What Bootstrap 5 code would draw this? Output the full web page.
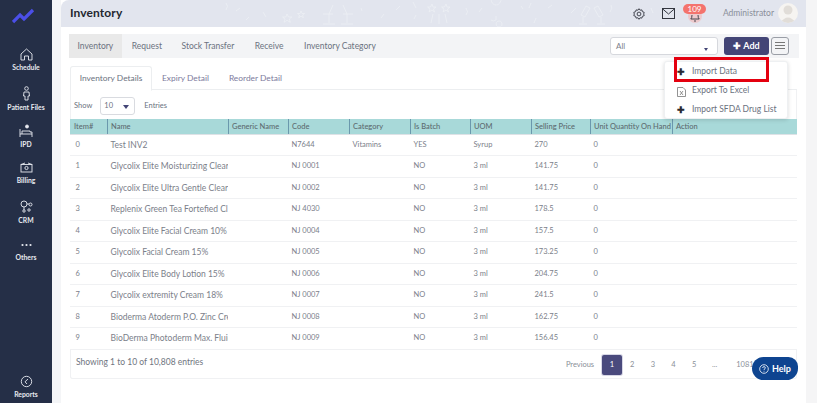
<!DOCTYPE html>
<html lang="en"><head><meta charset="utf-8"><title>Inventory</title>
<link href="https://cdn.jsdelivr.net/npm/bootstrap@5.3.0/dist/css/bootstrap.min.css" rel="stylesheet">
<style>
html,body{height:403px;overflow:hidden}
body{font-family:Lato,"Noto Sans",sans-serif;color:#6b7280;background:#fff;font-size:8px}
.shell{height:403px}
.rail{width:52px;background:#252f47;color:#e8eaf0;flex:none}
.logo-box{height:48px;padding:8px 0 0 12px}
.rail-item{font-size:6.8px;font-weight:700;line-height:8px;text-align:center;height:38px}
.rail-item svg{display:block;margin:0 auto 2px}
.rail-last{height:28px}
.rail-gap{width:9px;background:#f4f5f7;flex:none}
.main{width:745px;flex:none;position:relative}
.scroll-band{width:11px;background:#f5f5f6;flex:none}
.topbar{height:27px;background:#e2e5ee;border-top-left-radius:8px;padding:0 0 0 9px;position:relative;overflow:hidden}
.topbar h1{font-size:12px;font-weight:700;color:#23272f;margin:0;letter-spacing:.1px}
.confetti{position:absolute;left:0;top:0;width:745px;height:27px}
.admin{font-size:8.5px;color:#8a8f9a;margin:0 4px 0 0}
.avatar{width:20px;height:20px;border-radius:50%;background:#f6f4f1;overflow:hidden;margin-right:8px;margin-top:-1px}
.top-icons{position:relative;z-index:1}
.mail-ic{margin:0 48px 0 17px}
.alert-pill{position:absolute;left:622px;top:4px;width:23px;height:10px;background:#f4736d;color:#fff;font-size:8px;line-height:10px;text-align:center;border-radius:6px;z-index:2}
.bell{position:absolute;left:627px;top:9px;z-index:1;background:#edc9cc;border-radius:50%;width:14px;height:14px}
.bell svg{display:block}
.tabbar{margin:7px 7px 0 8px;height:24px;background:#f3f4f6}
.tabbar a{font-size:8.5px;color:#6b7280;text-decoration:none;padding:0 8.5px;line-height:24px;display:block}
.tabbar a.on{background:#e9e9e9}
.tabbar a.t-req{padding-left:10px}
.tabbar a.t-stock{padding-left:11px}
.tabbar a.t-rec{padding-left:12px}
.tabbar a.t-cat{padding-left:12px}
.filter-box{width:108px;height:18px;border:1px solid #d6d8dd;border-radius:3px;background:#fff;font-size:8px;padding:0 5px;line-height:16px;position:relative;color:#7b808a}
.caret-mini{position:absolute;right:9px;top:10px;border:solid transparent;border-width:3px 2.5px 0;border-top-color:#434576;width:0;height:0}
.caret-big{right:5px;top:7px;border-width:4px 3px 0}
.add-btn{width:45px;height:18px;background:#434576;border-radius:3px;color:#fff;font-size:9px;font-weight:700;line-height:18px;text-align:center;margin-left:6px}
.menu-btn{width:18px;height:18px;border:1px solid #9a9ea6;border-radius:3px;margin:0 10px 0 2px;padding:4px 3px}
.menu-btn i{display:block;height:1px;background:#777;margin-bottom:2px}
.tabs-line{margin:8px 9px 0 9px;height:24px;border-bottom:1px solid #eceef0}
.tabs-line a{display:block;font-size:8.4px;color:#7c7a9c;text-decoration:none;padding:0 10px;line-height:24px}
.tabs-line a.on{color:#6b7280;background:#fff;border:1px solid #eceef0;border-bottom-color:#fff;border-radius:3px 3px 0 0;height:25px;line-height:23px;width:82px;padding:0;text-align:center}
.panel{margin:0 9px 0 9px;box-shadow:inset 1px 0 0 #f0f1f3,inset -1px 0 0 #f0f1f3,inset 0 -1px 0 #f0f1f3;border-radius:0 0 3px 3px;height:289px;position:relative}
.show-row{height:29px;padding:7px 0 0 4px;font-size:7.5px}
.lbl{line-height:18px}
.len-box{width:35px;height:18px;border:1px solid #d9dbe0;border-radius:3px;margin:0 9px 0 8px;padding:0 3px;line-height:16px;position:relative;color:#6b7280}
.inv{table-layout:fixed;width:727px;margin:0;font-size:7.5px;color:#757b86;border-collapse:collapse}
.c1{width:37px}.c2{width:121px}.c3{width:60px}.c4{width:61px}.c5{width:59px}.c6{width:82px}
.inv th{background:#a8d9d9;font-weight:500;height:15px;padding:0 3.5px;color:#5d6b70;border-right:1px solid #6b98ad;white-space:nowrap;overflow:hidden;line-height:14px}
.inv th:last-child{border-right:0}
.inv th:first-child{padding-left:4px}
.inv td{height:21.5px;padding:0 3.5px;white-space:nowrap;overflow:hidden;border:0;border-bottom:1px solid #f0f1f3;line-height:20px;background:#fff;color:#7b808a}
.inv td:first-child{padding-left:5.5px}
.inv td.nm{font-size:8.5px}
.foot{padding:6px 0 0 6px;font-size:8.5px;color:#6f7580}
.pager{font-size:7.5px;position:absolute;left:488px;top:265px;height:20px;color:#8a8f98}
.pager span{display:block;width:20.6px;text-align:center;line-height:20px}
.pager .now{background:#4a4a7d;color:#fff;box-shadow:0 0 0 1px #d8d8e6;width:20px;border-radius:2px}
.pager .prev{width:44px}
.pager .end{width:40px}
.drop{position:absolute;left:603px;top:61px;width:124px;height:58px;background:#fff;border:1px solid #eef0f2;border-radius:3px;box-shadow:0 1px 4px rgba(0,0,0,.15);z-index:5;font-size:8.5px;color:#6b7280}
.drop div{height:19px;line-height:19px;padding-left:12px;display:flex;align-items:center}
.drop .gl{width:15px;flex:none;color:#2a2a33;font-size:9px;font-weight:700}
.hot{position:absolute;left:613px;top:57px;width:95px;height:25px;border:3px solid #e4000f;z-index:6}
.help{position:absolute;left:691px;top:357px;width:46px;height:23px;background:#0e4490;color:#fff;border-radius:12px 10px 12px 12px;font-size:9px;font-weight:700;z-index:7;display:flex;align-items:center;justify-content:center;gap:3px}
</style></head><body>
<div class="shell d-flex">
<nav class="rail d-flex flex-column">
 <div class="logo-box"><svg width="23" height="16" viewBox="0 0 23 16"><path d="M1 14 L8 7 L12 11 L21 2" fill="none" stroke="#4b4fe8" stroke-width="3.2" stroke-linejoin="miter"/></svg></div>
 <div class="rail-item"><svg width="13" height="13" viewBox="0 0 13 13" fill="none" stroke="#e8eaf0" stroke-width=".9"><path d="M1 6 L6.5 1 L12 6 V12 H8.5 V8 H4.5 V12 H1 Z"/></svg>Schedule</div>
 <div class="rail-item"><svg width="9" height="15" viewBox="0 0 9 15" fill="none" stroke="#e8eaf0" stroke-width=".9"><circle cx="4.5" cy="2.5" r="1.8"/><path d="M2 6 H7 L7.5 10 H6 V14 H3 V10 H1.5 Z"/></svg>Patient Files</div>
 <div class="rail-item"><svg width="14" height="14" viewBox="0 0 14 14" fill="none" stroke="#e8eaf0" stroke-width=".9"><circle cx="8" cy="2.5" r="1.5" fill="#e8eaf0"/><path d="M1 5 V13 M13 8 V13 M1 10 H13 M3 10 V7 H11 V8 H13"/></svg>IPD</div>
 <div class="rail-item"><svg width="13" height="12" viewBox="0 0 13 12" fill="none" stroke="#e8eaf0" stroke-width=".9"><rect x="1" y="2.5" width="11" height="7.5"/><circle cx="6.5" cy="6" r="1.6"/><path d="M1 2.5 L5 1 M8 1 L12 2.5"/></svg>Billing</div>
 <div class="rail-item"><svg width="13" height="14" viewBox="0 0 13 14" fill="none" stroke="#e8eaf0" stroke-width=".9"><circle cx="4" cy="4" r="3"/><circle cx="10.5" cy="4.5" r="1.5"/><circle cx="4" cy="11" r="1.2"/><circle cx="9" cy="10" r="1.2"/><path d="M7 4 H9 M4 7 V10"/></svg>CRM</div>
 <div class="rail-item"><svg width="13" height="13" viewBox="0 0 13 13" fill="#e8eaf0"><circle cx="2.5" cy="7" r="1.1"/><circle cx="6.5" cy="7" r="1.1"/><circle cx="10.5" cy="7" r="1.1"/></svg>Others</div>
 <div class="rail-item rail-last mt-auto"><svg width="13" height="13" viewBox="0 0 13 13" fill="none" stroke="#e8eaf0" stroke-width=".9"><circle cx="6.5" cy="6.5" r="5.2"/><path d="M8 4 L5 6.8 L7 9"/></svg>Reports</div>
</nav>
<div class="rail-gap"></div>
<main class="main">
 <header class="topbar d-flex align-items-center">
  <svg class="confetti" viewBox="0 0 745 27" fill="none" stroke="#eef0f5" stroke-width=".7"><path d="M165 3 q3 3 0 7 M175 11 l4 -3 M185 20 l3 -3 M205 17 l-3 -5"/><path d="M226 14l1.5 3 3.3 0-2.5 2 1 3.3-3.3-2-3 2 1-3.3-2.5-2 3.3 0z M240 11l1 2.5 2.6 0-2 1.6.8 2.6-2.4-1.5-2.3 1.5.8-2.6-2-1.6 2.600 0z"/><path d="M272 5 l-4 9 v9 M282 5 l4 9 v9 M262 24 h12 M280 24 h12 M262 14 h10 M282 14 h10"/><path d="M300 8 l1 3 M320 18 l3 -4 M335 10 l4 -4 M355 15 l-2 4 M352 2 l3 6"/><path d="M371 4l1 3 3 0-2.500 2 1 3-2.500-2-3 2 1-3-2.500-2 3 0z M385 4l1 3 3 0-2.500 2 1 3-2.500-2-3 2 1-3-2.500-2 3 0z M378 14 v10 M372 14 l-2 9 M384 14 l2 9"/><path d="M405 8 q3 4 0 7 M418 12 l3 -4"/><path d="M355 5 a5 6 0 1 1 .1 0 z" transform="translate(80 0)"/><path d="M435 16 v4 q-3 2 -5 0 M438 21 a3 3 0 1 0 .1 0"/><path d="M460 6 l2 3 M475 18 l-2 5 M487 8 l4 -3 M470 3 l-2 5 M510 13 l5 -5"/><path d="M525 6 l-5 9 4 2 5-9z M537 6 l5 9-4 2-5-9z M522 17 v6 M540 17 v6 M518 24 h8 M536 24 h8 M550 5 q2 3 -1 7 M570 12 l3 -3 M590 8 l2 5 M605 15 l4 -3"/></svg>
  <h1 class="position-relative">Inventory</h1>
  <div class="top-icons d-flex align-items-center ms-auto">
   <svg width="12" height="12" viewBox="0 0 12 12" fill="none" stroke="#33363f" stroke-width=".9"><circle cx="6" cy="6" r="1.9"/><path d="M6 .7l1.1 1.5 1.8-.3.5 1.8 1.8.6-.5 1.7.5 1.7-1.8.6-.5 1.8-1.8-.3L6 11.3 4.9 9.8l-1.8.3-.5-1.8L.8 7.7l.5-1.7-.5-1.7 1.8-.6.5-1.8 1.8.3z"/></svg>
   <svg width="13" height="11" viewBox="0 0 13 11" fill="none" stroke="#33363f" stroke-width="1" class="mail-ic"><rect x=".5" y=".5" width="12" height="10"/><path d="M.5 .8 L6.5 6 L12.5 .8"/></svg>
   <p class="admin">Administrator</p>
   <div class="avatar"><svg width="20" height="20" viewBox="0 0 20 20" fill="#e1ddd8"><circle cx="10" cy="7" r="4.5"/><path d="M2 20 q8-11 16 0z"/></svg></div>
  </div>
 </header>
 <span class="bell"><svg width="14" height="14" viewBox="0 0 14 14" fill="none" stroke="#33363f" stroke-width=".9"><path d="M4 6 Q4 9 2.8 10 H11.2 Q10 9 10 6 M6 12 H8"/></svg></span>
 <span class="alert-pill">109</span>

 <div class="tabbar d-flex align-items-center">
  <a class="on" href="#">Inventory</a><a class="t-req" href="#">Request</a><a class="t-stock" href="#">Stock Transfer</a><a class="t-rec" href="#">Receive</a><a class="t-cat" href="#">Inventory Category</a>
  <div class="filter-box ms-auto">All<span class="caret-mini"></span></div>
  <div class="add-btn">✚ Add</div>
  <div class="menu-btn"><i></i><i></i><i class="mb-0"></i></div>
 </div>

 <div class="tabs-line d-flex">
  <a class="on" href="#">Inventory Details</a><a href="#">Expiry Detail</a><a href="#">Reorder Detail</a>
 </div>
 <section class="panel">
  <div class="show-row d-flex align-items-start"><span class="lbl">Show</span><div class="len-box">10<span class="caret-mini caret-big"></span></div><span class="lbl">Entries</span></div>
  <table class="table inv">
   <colgroup><col class="c1"><col class="c2"><col class="c3"><col class="c4"><col class="c4"><col class="c3"><col class="c4"><col class="c5"><col class="c6"><col></colgroup>
   <thead><tr><th>Item#</th><th>Name</th><th>Generic Name</th><th>Code</th><th>Category</th><th>Is Batch</th><th>UOM</th><th>Selling Price</th><th>Unit Quantity On Hand</th><th>Action</th></tr></thead>
   <tbody>
    <tr><td>0</td><td class="nm">Test INV2</td><td></td><td>N7644</td><td>Vitamins</td><td>YES</td><td>Syrup</td><td>270</td><td>0</td><td></td></tr>
    <tr><td>1</td><td class="nm">Glycolix Elite Moisturizing Clear</td><td></td><td>NJ 0001</td><td></td><td>NO</td><td>3 ml</td><td>141.75</td><td>0</td><td></td></tr>
    <tr><td>2</td><td class="nm">Glycolix Elite Ultra Gentle Clear</td><td></td><td>NJ 0002</td><td></td><td>NO</td><td>3 ml</td><td>141.75</td><td>0</td><td></td></tr>
    <tr><td>3</td><td class="nm">Replenix Green Tea Fortefied Cl</td><td></td><td>NJ 4030</td><td></td><td>NO</td><td>3 ml</td><td>178.5</td><td>0</td><td></td></tr>
    <tr><td>4</td><td class="nm">Glycolix Elite Facial Cream 10%</td><td></td><td>NJ 0004</td><td></td><td>NO</td><td>3 ml</td><td>157.5</td><td>0</td><td></td></tr>
    <tr><td>5</td><td class="nm">Glycolix Facial Cream 15%</td><td></td><td>NJ 0005</td><td></td><td>NO</td><td>3 ml</td><td>173.25</td><td>0</td><td></td></tr>
    <tr><td>6</td><td class="nm">Glycolix Elite Body Lotion 15%</td><td></td><td>NJ 0006</td><td></td><td>NO</td><td>3 ml</td><td>204.75</td><td>0</td><td></td></tr>
    <tr><td>7</td><td class="nm">Glycolix extremity Cream 18%</td><td></td><td>NJ 0007</td><td></td><td>NO</td><td>3 ml</td><td>241.5</td><td>0</td><td></td></tr>
    <tr><td>8</td><td class="nm">Bioderma Atoderm P.O. Zinc Cre</td><td></td><td>NJ 0008</td><td></td><td>NO</td><td>3 ml</td><td>162.75</td><td>0</td><td></td></tr>
    <tr><td>9</td><td class="nm">BioDerma Photoderm Max. Fluid</td><td></td><td>NJ 0009</td><td></td><td>NO</td><td>3 ml</td><td>156.45</td><td>0</td><td></td></tr>
   </tbody>
  </table>
  <div class="foot">Showing 1 to 10 of 10,808 entries</div>
  <div class="pager d-flex"><span class="prev">Previous</span><span class="now">1</span><span>2</span><span>3</span><span>4</span><span>5</span><span>...</span><span class="end">1081</span></div>
 </section>
 <div class="drop">
  <div><span class="gl">✚</span>Import Data</div>
  <div><span class="gl"><svg width="9" height="10" viewBox="0 0 9 10" fill="none" stroke="#777" stroke-width=".8"><path d="M.5 .5H6L8.5 3V9.5H.5Z"/><path d="M3 4L6 8M6 4L3 8"/></svg></span>Export To Excel</div>
  <div><span class="gl">✚</span>Import SFDA Drug List</div>
 </div>
 <div class="hot"></div>
 <div class="help"><svg width="10" height="10" viewBox="0 0 10 10" fill="none" stroke="#fff" stroke-width=".8"><circle cx="5" cy="5" r="4.3"/><path d="M3.6 4Q3.8 2.6 5 2.6 6.4 2.7 6.4 3.9 6.3 4.7 5 5.5V6.2M5 7.2V7.8"/></svg>Help</div>
</main>
<div class="scroll-band"></div>
</div>
</body></html>
